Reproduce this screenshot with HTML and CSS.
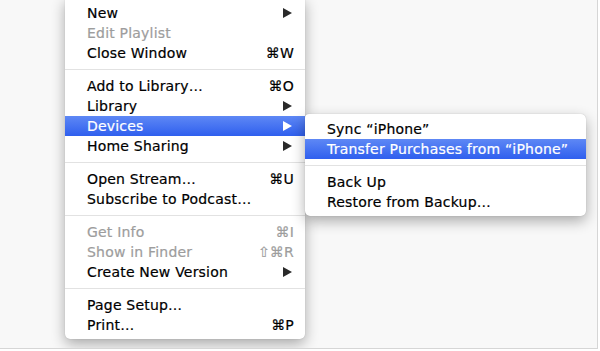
FILE: index.html
```html
<!DOCTYPE html>
<html>
<head>
<meta charset="utf-8">
<link rel="stylesheet" href="styles.css">
</head>
<body>
<div class="desk">
  <div class="menu main">
    <div class="item"><span>New</span><svg class="arr" viewBox="0 0 9 10"><polygon points="0,0 9,5 0,10"/></svg></div>
    <div class="item off"><span>Edit Playlist</span></div>
    <div class="item"><span>Close Window</span><span class="key">⌘W</span></div>
    <div class="sep"></div>
    <div class="item"><span>Add to Library…</span><span class="key">⌘O</span></div>
    <div class="item"><span>Library</span><svg class="arr" viewBox="0 0 9 10"><polygon points="0,0 9,5 0,10"/></svg></div>
    <div class="item sel"><span>Devices</span><svg class="arr" viewBox="0 0 9 10"><polygon points="0,0 9,5 0,10"/></svg></div>
    <div class="item"><span>Home Sharing</span><svg class="arr" viewBox="0 0 9 10"><polygon points="0,0 9,5 0,10"/></svg></div>
    <div class="sep"></div>
    <div class="item"><span>Open Stream…</span><span class="key">⌘U</span></div>
    <div class="item"><span>Subscribe to Podcast…</span></div>
    <div class="sep"></div>
    <div class="item off"><span>Get Info</span><span class="key">⌘I</span></div>
    <div class="item off"><span>Show in Finder</span><span class="key">⇧⌘R</span></div>
    <div class="item"><span>Create New Version</span><svg class="arr" viewBox="0 0 9 10"><polygon points="0,0 9,5 0,10"/></svg></div>
    <div class="sep"></div>
    <div class="item"><span>Page Setup…</span></div>
    <div class="item"><span>Print…</span><span class="key">⌘P</span></div>
  </div>
  <div class="menu sub">
    <div class="item"><span>Sync “iPhone”</span></div>
    <div class="item sel"><span>Transfer Purchases from “iPhone”</span></div>
    <div class="sep"></div>
    <div class="item"><span>Back Up</span></div>
    <div class="item"><span>Restore from Backup…</span></div>
  </div>
</div>
</body>
</html>
```
FILE: styles.css
```css
html, body {
  margin: 0;
  padding: 0;
  background: #ffffff;
}
.desk {
  position: relative;
  width: 597px;
  height: 348px;
  background: #f8f8f8;
  border-right: 1px solid #d6d6d6;
  border-bottom: 1px solid #d6d6d6;
  overflow: hidden;
  font-family: "DejaVu Sans", "Liberation Sans", sans-serif;
  font-size: 14px;
  letter-spacing: 0.2px;
  color: #000;
  -webkit-text-stroke: 0.2px currentColor;
}
.menu {
  position: absolute;
  background: #ffffff;
  box-shadow: 0 5px 14px rgba(0, 0, 0, 0.32), 0 0 1px rgba(0, 0, 0, 0.25);
}
.main {
  left: 65px;
  top: -2px;
  width: 240px;
  padding: 5px 0 4px;
  border-radius: 0 0 5px 5px;
}
.sub {
  left: 305px;
  top: 114px;
  width: 281px;
  padding: 5px 0 4px;
  border-radius: 4px 5px 5px 5px;
}
.item {
  height: 20px;
  line-height: 20px;
  display: flex;
  align-items: center;
  justify-content: space-between;
  padding: 0 11px 0 22px;
  white-space: nowrap;
}
.item span {
  line-height: 20px;
}
.off {
  color: #9d9d9d;
}
.sel {
  background: linear-gradient(#5e88f5, #2f5fee);
  color: #ffffff;
}
.arr {
  width: 9px;
  height: 10px;
  margin-right: 2px;
  fill: #2a2a2a;
}
.sel .arr {
  fill: #ffffff;
}
.sep {
  height: 13px;
  display: flex;
  align-items: center;
}
.sep::before {
  content: "";
  display: block;
  width: 100%;
  height: 1px;
  background: #e2e2e2;
}
```
